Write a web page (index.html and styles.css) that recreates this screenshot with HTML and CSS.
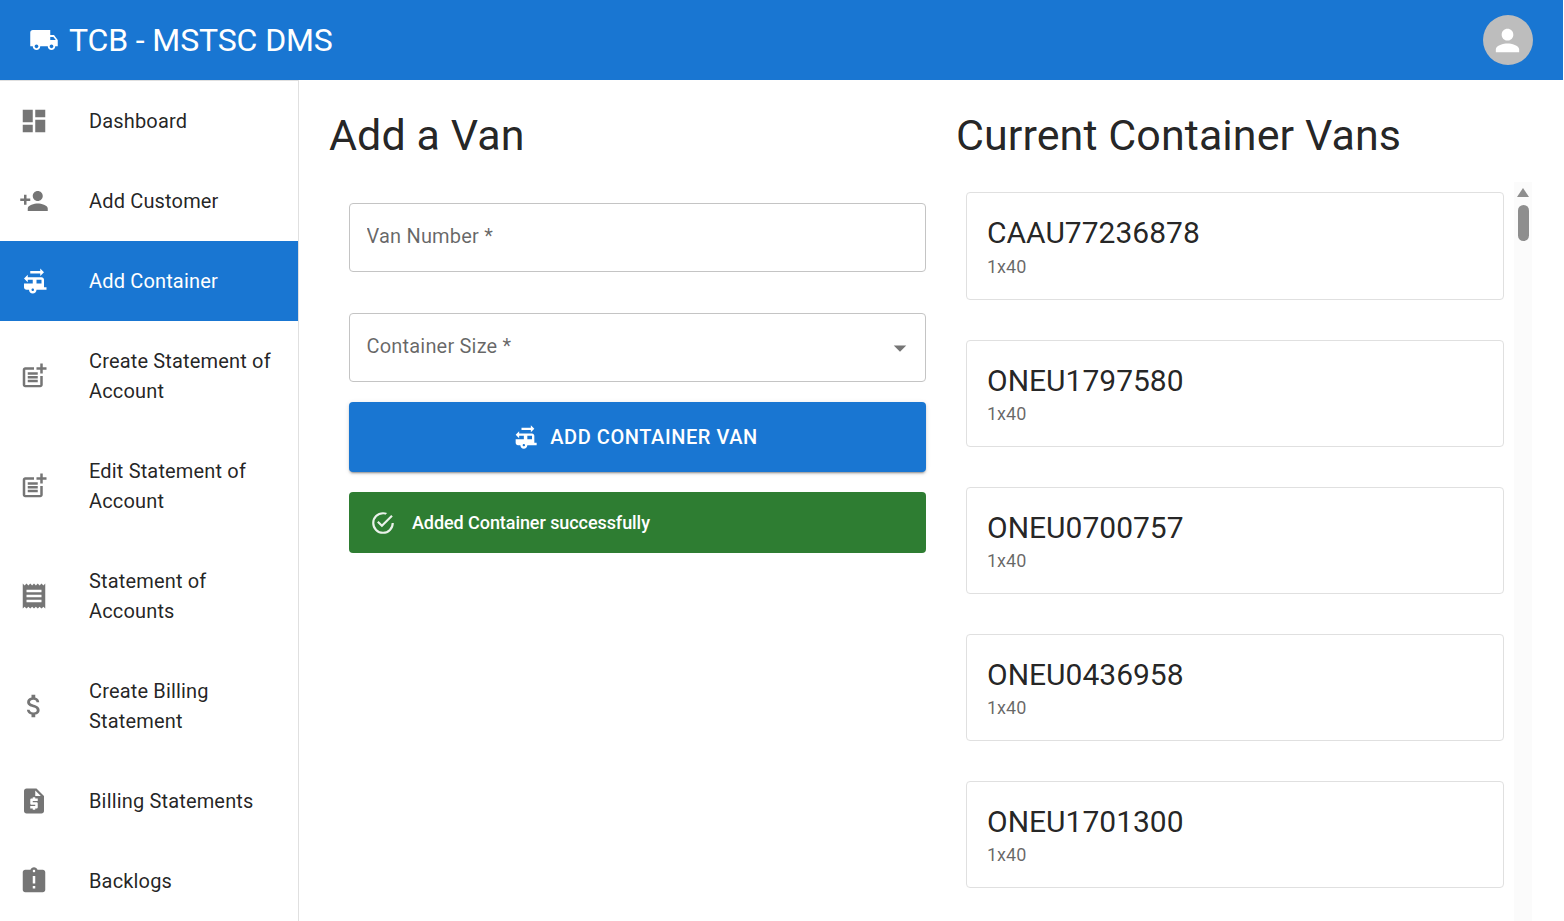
FILE: index.html
```html
<!DOCTYPE html>
<html lang="en">
<head>
    <meta charset="UTF-8">
    <meta name="viewport" content="width=device-width, initial-scale=1.0">
    <title>TCB - MSTSC DMS</title>
    <link rel="stylesheet" href="styles.css">
</head>
<body>
    <header class="topbar">
        <svg class="topbar-icon" viewBox="0 0 24 24"><path d="M20 8h-3V4H3c-1.1 0-2 .9-2 2v11h2c0 1.66 1.34 3 3 3s3-1.34 3-3h6c0 1.66 1.34 3 3 3s3-1.34 3-3h2v-5l-3-4zM6 18.5c-.83 0-1.5-.67-1.5-1.5s.67-1.5 1.5-1.5 1.5.67 1.5 1.5-.67 1.5-1.5 1.5zm13.5-9l1.96 2.5H17V9.5h2.5zm-1.5 9c-.83 0-1.5-.67-1.5-1.5s.67-1.5 1.5-1.5 1.5.67 1.5 1.5-.67 1.5-1.5 1.5z"/></svg>
        <span class="topbar-title">TCB - MSTSC DMS</span>
        <div class="avatar">
            <svg viewBox="0 0 24 24"><path d="M12 12c2.21 0 4-1.79 4-4s-1.79-4-4-4-4 1.79-4 4 1.79 4 4 4zm0 2c-2.67 0-8 1.34-8 4v2h16v-2c0-2.66-5.33-4-8-4z"/></svg>
        </div>
    </header>

    <div class="layout">
        <nav class="sidebar">
            <a class="nav-item">
                <svg class="nav-icon" viewBox="0 0 24 24"><path d="M3 13h8V3H3v10zm0 8h8v-6H3v6zm10 0h8V11h-8v10zm0-18v6h8V3h-8z"/></svg>
                <span>Dashboard</span>
            </a>
            <a class="nav-item">
                <svg class="nav-icon" viewBox="0 0 24 24"><path d="M15 12c2.21 0 4-1.79 4-4s-1.79-4-4-4-4 1.79-4 4 1.79 4 4 4zm-9-2V7H4v3H1v2h3v3h2v-3h3v-2H6zm9 4c-2.67 0-8 1.34-8 4v2h16v-2c0-2.66-5.33-4-8-4z"/></svg>
                <span>Add Customer</span>
            </a>
            <a class="nav-item active">
                <svg class="nav-icon" viewBox="0 0 24 24"><path d="M20 17v-6c0-1.1-.9-2-2-2H7V7l-3 3 3 3v-2h4v3H4v3c0 1.1.9 2 2 2h2c0 1.66 1.34 3 3 3s3-1.34 3-3h8v-2h-2zm-9 3c-.55 0-1-.45-1-1s.45-1 1-1 1 .45 1 1-.45 1-1 1zm7-6h-4v-3h4v3zM17 2v2H9v2h8v2l3-3z"/></svg>
                <span>Add Container</span>
            </a>
            <a class="nav-item">
                <svg class="nav-icon" viewBox="0 0 24 24"><path d="M17 19.22H5V7h7V5H5c-1.1 0-2 .9-2 2v12c0 1.1.9 2 2 2h12c1.1 0 2-.9 2-2v-7h-2v7.22z"/><path d="M19 2h-2v3h-3c.01.01 0 2 0 2h3v2.99c.01.01 2 0 2 0V7h3V5h-3V2z"/><path d="M7 9h8v2H7zM7 12v2h8v-2zM7 15h8v2H7z"/></svg>
                <span>Create Statement of Account</span>
            </a>
            <a class="nav-item">
                <svg class="nav-icon" viewBox="0 0 24 24"><path d="M17 19.22H5V7h7V5H5c-1.1 0-2 .9-2 2v12c0 1.1.9 2 2 2h12c1.1 0 2-.9 2-2v-7h-2v7.22z"/><path d="M19 2h-2v3h-3c.01.01 0 2 0 2h3v2.99c.01.01 2 0 2 0V7h3V5h-3V2z"/><path d="M7 9h8v2H7zM7 12v2h8v-2zM7 15h8v2H7z"/></svg>
                <span>Edit Statement of Account</span>
            </a>
            <a class="nav-item">
                <svg class="nav-icon" viewBox="0 0 24 24"><path d="M18 17H6v-2h12v2zm0-4H6v-2h12v2zm0-4H6V7h12v2zM3 22l1.5-1.5L6 22l1.5-1.5L9 22l1.5-1.5L12 22l1.5-1.5L15 22l1.5-1.5L18 22l1.5-1.5L21 22V2l-1.5 1.5L18 2l-1.5 1.5L15 2l-1.5 1.5L12 2l-1.5 1.5L9 2 7.5 3.5 6 2 4.5 3.5 3 2v20z"/></svg>
                <span>Statement of Accounts</span>
            </a>
            <a class="nav-item">
                <svg class="nav-icon" viewBox="0 0 24 24"><path d="M11.8 10.9c-2.27-.59-3-1.2-3-2.15 0-1.09 1.01-1.85 2.7-1.85 1.78 0 2.44.85 2.5 2.1h2.21c-.07-1.72-1.12-3.3-3.21-3.81V3h-3v2.16c-1.94.42-3.5 1.68-3.5 3.61 0 2.31 1.91 3.46 4.7 4.13 2.5.6 3 1.48 3 2.41 0 .69-.49 1.79-2.7 1.79-2.06 0-2.87-.92-2.98-2.1h-2.2c.12 2.19 1.76 3.42 3.68 3.83V21h3v-2.15c1.95-.37 3.5-1.5 3.5-3.55 0-2.84-2.43-3.81-4.7-4.4z"/></svg>
                <span>Create Billing Statement</span>
            </a>
            <a class="nav-item">
                <svg class="nav-icon" viewBox="0 0 24 24"><path d="M14 2H6c-1.1 0-1.99.9-1.99 2L4 20c0 1.1.89 2 1.99 2H18c1.1 0 2-.9 2-2V8l-6-6zm1 10h-4v1h3c.55 0 1 .45 1 1v3c0 .55-.45 1-1 1h-1v1h-2v-1H9v-2h4v-1h-3c-.55 0-1-.45-1-1v-3c0-.55.45-1 1-1h1V9h2v1h2v2zm-2-4V3.5L17.5 8H13z"/></svg>
                <span>Billing Statements</span>
            </a>
            <a class="nav-item">
                <svg class="nav-icon" viewBox="0 0 24 24"><path d="M19 3h-4.18C14.4 1.84 13.3 1 12 1c-1.3 0-2.4.84-2.82 2H5c-1.1 0-2 .9-2 2v14c0 1.1.9 2 2 2h14c1.1 0 2-.9 2-2V5c0-1.1-.9-2-2-2zm-6 15h-2v-2h2v2zm0-4h-2V8h2v6zm-1-9c-.55 0-1-.45-1-1s.45-1 1-1 1 .45 1 1-.45 1-1 1z"/></svg>
                <span>Backlogs</span>
            </a>
        </nav>

        <main class="content">
            <section class="form-column">
                <h1 class="page-title">Add a Van</h1>
                <form class="van-form">
                    <input class="field" type="text" placeholder="Van Number *">
                    <div class="field select-field">
                        <span>Container Size *</span>
                        <svg class="select-arrow" viewBox="0 0 24 24"><path d="M7 10l5 5 5-5z"/></svg>
                    </div>
                    <button class="submit-btn" type="button">
                        <svg viewBox="0 0 24 24"><path d="M20 17v-6c0-1.1-.9-2-2-2H7V7l-3 3 3 3v-2h4v3H4v3c0 1.1.9 2 2 2h2c0 1.66 1.34 3 3 3s3-1.34 3-3h8v-2h-2zm-9 3c-.55 0-1-.45-1-1s.45-1 1-1 1 .45 1 1-.45 1-1 1zm7-6h-4v-3h4v3zM17 2v2H9v2h8v2l3-3z"/></svg>
                        ADD CONTAINER VAN
                    </button>
                    <div class="alert">
                        <svg viewBox="0 0 24 24"><path d="M20 12a8 8 0 0 1-8 8 8 8 0 0 1-8-8 8 8 0 0 1 8-8c.76 0 1.5.11 2.2.31l1.57-1.57A9.822 9.822 0 0 0 12 2 10 10 0 0 0 2 12a10 10 0 0 0 10 10 10 10 0 0 0 10-10M7.91 10.08 6.5 11.5 11 16 21 6l-1.41-1.42L11 13.17l-3.09-3.09z"/></svg>
                        <span>Added Container successfully</span>
                    </div>
                </form>
            </section>

            <section class="list-column">
                <h1 class="page-title">Current Container Vans</h1>
                <div class="list-wrap">
                    <div class="van-list">
                        <div class="van-card first">
                            <div class="van-number">CAAU77236878</div>
                            <div class="van-size">1x40</div>
                        </div>
                        <div class="van-card">
                            <div class="van-number">ONEU1797580</div>
                            <div class="van-size">1x40</div>
                        </div>
                        <div class="van-card">
                            <div class="van-number">ONEU0700757</div>
                            <div class="van-size">1x40</div>
                        </div>
                        <div class="van-card">
                            <div class="van-number">ONEU0436958</div>
                            <div class="van-size">1x40</div>
                        </div>
                        <div class="van-card">
                            <div class="van-number">ONEU1701300</div>
                            <div class="van-size">1x40</div>
                        </div>
                    </div>
                    <div class="scrollbar">
                        <div class="scroll-arrow"></div>
                        <div class="scroll-thumb"></div>
                    </div>
                </div>
            </section>
        </main>
    </div>
</body>
</html>
```

FILE: styles.css
```css
* {
    box-sizing: border-box;
}
html, body {
    height: 100%;
}
body {
    margin: 0;
    width: 1563px;
    overflow: hidden;
    font-family: Roboto, "Liberation Sans", sans-serif;
    color: rgba(0, 0, 0, 0.87);
    background: #fff;
}
.topbar {
    height: 80px;
    display: flex;
    align-items: center;
    padding: 0 30px 0 29px;
    background: #1976d2;
    color: #fff;
}
.topbar-icon {
    width: 30px;
    height: 30px;
    fill: #fff;
    margin-right: 10px;
}
.topbar-title {
    font-size: 32px;
    line-height: 1;
    letter-spacing: -0.13px;
    flex: 1;
}
.avatar {
    width: 50px;
    height: 50px;
    border-radius: 50%;
    background: #bdbdbd;
    display: flex;
    align-items: center;
    justify-content: center;
}
.avatar svg {
    width: 35px;
    height: 35px;
    fill: #fff;
    margin-left: -1px;
}
.layout {
    display: flex;
    height: 841px;
}
.sidebar {
    width: 299px;
    flex-shrink: 0;
    border-top: 1px solid #e0e0e0;
    border-right: 1px solid #e0e0e0;
}
.nav-item {
    display: flex;
    align-items: center;
    padding: 25px 20px 25px 19px;
    font-size: 20px;
    line-height: 30px;
    letter-spacing: 0.16px;
}
.nav-item span {
    flex: 1;
}
.nav-icon {
    width: 30px;
    height: 30px;
    fill: #757575;
    margin-right: 40px;
    flex-shrink: 0;
}
.nav-item.active {
    background: #1976d2;
    color: #fff;
}
.nav-item.active .nav-icon {
    fill: #fff;
}
.content {
    flex: 1;
    display: flex;
    overflow: hidden;
}
.form-column {
    width: 658px;
    padding-left: 31px;
    flex-shrink: 0;
}
.page-title {
    margin: 0 0 0 -1px;
    padding-top: 27px;
    font-size: 43px;
    font-weight: 400;
    line-height: 56px;
    letter-spacing: 0.07px;
}
.van-form {
    width: 596px;
    padding: 40px 0 0 19px;
}
.field {
    display: block;
    width: 100%;
    height: 69px;
    padding: 0 16.5px 4px;
    border: 1px solid #c4c4c4;
    border-radius: 4px;
    font: 400 20px Roboto, sans-serif;
    color: rgba(0, 0, 0, 0.6);
    letter-spacing: 0.1875px;
    margin-bottom: 41px;
    background: #fff;
}
.field::placeholder {
    color: rgba(0, 0, 0, 0.6);
    opacity: 1;
}
.select-field {
    display: flex;
    align-items: center;
    justify-content: space-between;
    padding-right: 10px;
    margin-bottom: 20px;
}
.select-arrow {
    width: 30px;
    height: 30px;
    fill: #757575;
    margin-bottom: -4px;
}
.submit-btn {
    display: flex;
    align-items: center;
    justify-content: center;
    gap: 11px;
    width: 100%;
    height: 70px;
    padding: 0 6px 0 0;
    border: none;
    border-radius: 4px;
    background: #1976d2;
    color: #fff;
    font: 500 20px Roboto, sans-serif;
    letter-spacing: 0.57px;
    box-shadow: 0 3px 1px -2px rgba(0, 0, 0, 0.2), 0 2px 2px 0 rgba(0, 0, 0, 0.14), 0 1px 5px 0 rgba(0, 0, 0, 0.12);
}
.submit-btn svg {
    width: 28px;
    height: 28px;
    fill: #fff;
}
.alert {
    display: flex;
    align-items: center;
    gap: 16px;
    height: 61px;
    margin-top: 20px;
    padding: 0 21px;
    border-radius: 4px;
    background: #2e7d32;
    color: #fff;
    font-size: 18px;
    font-weight: 500;
    letter-spacing: -0.07px;
}
.alert svg {
    width: 26px;
    height: 26px;
    fill: #fff;
    opacity: 0.9;
}
.list-column {
    flex: 1;
    min-width: 0;
}
.list-wrap {
    display: flex;
    height: 739px;
    margin-top: 19px;
    padding-left: 9px;
    overflow: hidden;
}
.van-list {
    width: 538px;
    padding-top: 10px;
}
.van-card {
    height: 107px;
    margin-bottom: 40px;
    padding: 20px 20px 0;
    border: 1px solid #e0e0e0;
    border-radius: 4px;
}
.van-card.first {
    height: 108px;
}
.van-number {
    font-size: 30px;
    line-height: 40px;
}
.van-size {
    font-size: 18px;
    line-height: 25px;
    color: rgba(0, 0, 0, 0.6);
}
.first .van-size {
    margin-top: 1px;
}
.scrollbar {
    width: 18px;
    margin-left: 10px;
    background: #fbfbfb;
    padding-top: 6px;
}
.scroll-arrow {
    width: 0;
    height: 0;
    margin: 0 0 0 3px;
    border-left: 6.5px solid transparent;
    border-right: 6.5px solid transparent;
    border-bottom: 9px solid #8e8e8e;
}
.scroll-thumb {
    width: 11px;
    height: 36px;
    margin: 8px 0 0 4px;
    border-radius: 6px;
    background: #8e8e8e;
}
```
